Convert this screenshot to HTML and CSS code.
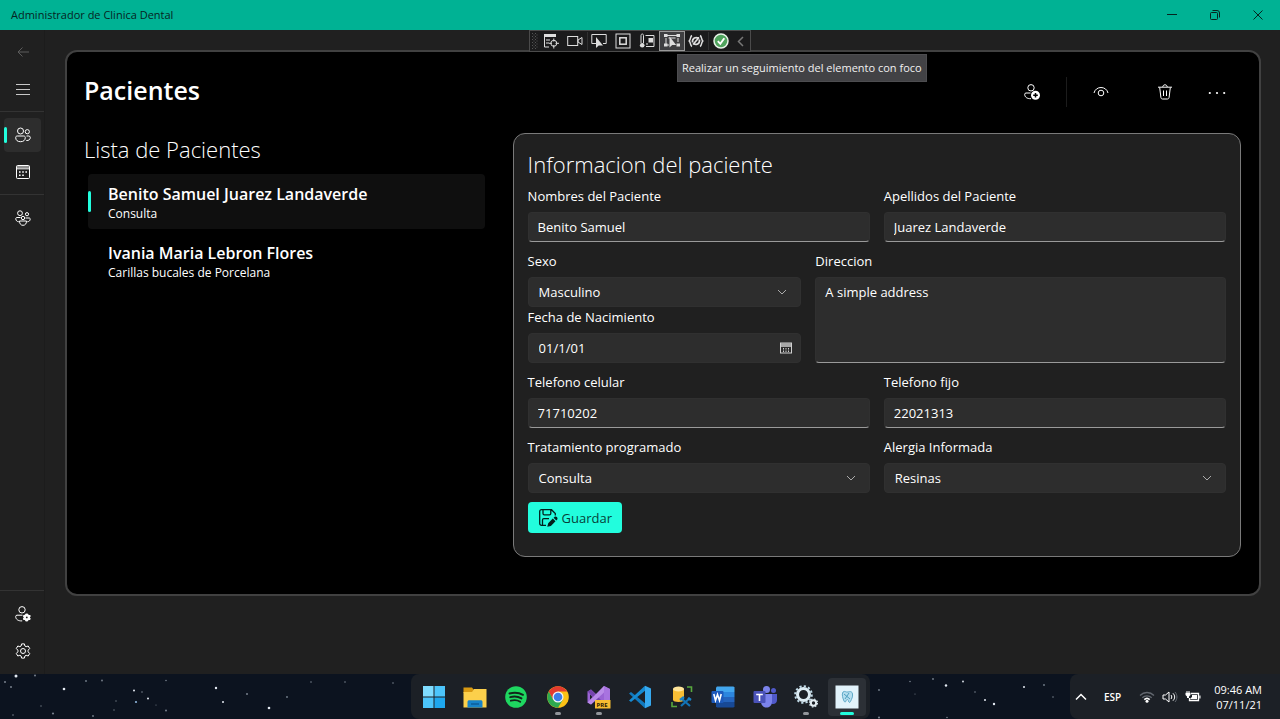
FILE: index.html
```html
<!DOCTYPE html>
<html lang="es">
<head>
<meta charset="utf-8">
<meta name="viewport" content="width=device-width, initial-scale=1">
<title>Administrador de Clinica Dental</title>
<link rel="stylesheet" href="styles.css">
</head>
<body>
<header class="titlebar">
  <span class="titlebar-text">Administrador de Clinica Dental</span>
  <div class="window-buttons">
    <button class="window-button" aria-label="Minimizar"><svg width="10" height="10" viewBox="0 0 10 10"><path d="M0 4.5h10"/></svg></button>
    <button class="window-button" aria-label="Restaurar"><svg width="10" height="10" viewBox="0 0 10 10"><rect x=".5" y="2.5" width="7" height="7" rx="1"/><path d="M2.5.5H7a2.500 2.500 0 0 1 2.500 2.500v4.500"/></svg></button>
    <button class="window-button" aria-label="Cerrar"><svg width="10" height="10" viewBox="0 0 10 10"><path d="M.5.5l9 9M9.500.5l-9 9"/></svg></button>
  </div>
</header>

<div class="app">
  <nav class="rail" aria-label="Principal">
    <button class="rail-button rail-button-muted" aria-label="Atras"><svg class="icon" viewBox="0 0 16 16"><path d="M14 8H3M7.500 3.500L3 8l4.500 4.500"/></svg></button>
    <button class="rail-button" aria-label="Menu"><svg class="icon" viewBox="0 0 16 16"><path d="M1 3.500h14M1 8.500h14M1 13.500h14" stroke="#c8c8c8"/></svg></button>
    <hr class="rail-line">
    <button class="rail-button rail-button-active" aria-label="Pacientes"><svg class="icon" viewBox="0 0 16 16"><circle cx="5.500" cy="4" r="3"/><circle cx="12.300" cy="4.700" r="2.100"/><path d="M2.200 9h6.600c.9 0 1.500.6 1.500 1.500 0 2.800-1.900 4.200-4.800 4.200S.7 13.300.7 10.500C.7 9.600 1.300 9 2.200 9zM11.500 9h2.300c.9 0 1.500.6 1.500 1.400 0 2-1.300 3.300-4 3.100"/></svg></button>
    <button class="rail-button" aria-label="Calendario"><svg class="icon" viewBox="0 0 16 16"><rect x="1.500" y="1.500" width="13" height="13" rx="1"/><path d="M1.500 3h13M1.500 4.800h13"/><path class="solid" d="M7.200 7.200h1.600v1.600H7.200zM10.400 7.200H12v1.600h-1.600zM4 7.200h1.600v1.600H4zM4 10.400h1.600V12H4zM7.200 10.400h1.600V12H7.200z"/></svg></button>
    <hr class="rail-line">
    <button class="rail-button" aria-label="Equipo"><svg class="icon" viewBox="0 0 16 16"><circle cx="5" cy="3.200" r="2.400"/><circle cx="12" cy="4.200" r="1.600"/><circle cx="8" cy="8" r="1.700"/><path d="M4.500 11h7c0 2.800-1.300 4.300-3.500 4.300S4.500 13.800 4.500 11zM5.500 7.500H2c-1 0-1.300.6-1.200 1.500.2 1.600 1.200 2.600 3 2.800M10.500 8H14c1 0 1.300.5 1.200 1.300-.2 1.500-1.200 2.300-2.900 2.500"/></svg></button>
    <div class="rail-spacer"></div>
    <hr class="rail-line">
    <button class="rail-button" aria-label="Cuenta"><svg class="icon" viewBox="0 0 16 16"><circle cx="7" cy="3.800" r="3.200"/><path d="M7.500 9.200H2c-.8 0-1.300.5-1.300 1.300 0 2.700 2.200 4.600 6.500 4.400"/><path class="solid" d="M10.500 7.800l1.300-.3 1.200.3.700 1.100 1.600.1.400 1.300-.9 1.100.9 1.200-.6 1.400-1.500.1-.8 1.200-1 .3-1.300-.4-.6-1.100-1.500-.2-.5-1.300.9-1.200-.9-1.200.6-1.300 1.400-.1z"/><circle class="hole" cx="11.800" cy="11.400" r=".9"/></svg></button>
    <button class="rail-button" aria-label="Configuracion"><svg class="icon" viewBox="0 0 16 16"><circle cx="8" cy="8" r="2.500"/><path d="M6.600.9h2.800l.5 2.100 1.200.7 2.100-.7 1.500 2.500-1.600 1.700v1.600l1.600 1.700-1.500 2.500-2.100-.7-1.200.7-.5 2.100H6.600L6.100 13l-1.200-.7-2.100.7-1.500-2.500 1.600-1.700V7.200L1.300 5.500 2.800 3l2.100.7L6.100 3z" stroke-linejoin="round"/></svg></button>
  </nav>

  <main class="content">
    <section class="panel">
      <div class="panel-header">
        <h1 class="page-title">Pacientes</h1>
        <div class="commands">
          <button class="command" aria-label="Agregar paciente"><svg class="icon" viewBox="0 0 16 16"><circle cx="7" cy="3.800" r="3.200"/><path d="M6.500 9H2c-.8 0-1.300.5-1.300 1.300 0 2.700 2.100 4.500 6.300 4.400"/><circle class="solid" cx="11.500" cy="11.300" r="4.500"/><path class="cut" d="M11.500 9v4.600M9.200 11.300h4.600"/></svg></button>
          <span class="command-line"></span>
          <button class="command" aria-label="Ver"><svg class="icon" viewBox="0 0 16 16"><path d="M1 9c.8-3.500 3.700-5.500 7-5.500S14.200 5.500 15 9"/><circle cx="8" cy="9" r="2.800"/></svg></button>
          <button class="command command-apart" aria-label="Eliminar"><svg class="icon" viewBox="0 0 16 16"><path d="M1 3.200h14M5.800 3c0-1.300.9-2.200 2.200-2.200s2.200.9 2.200 2.200M2.700 3.500l1.200 10c.1.900.7 1.500 1.600 1.500h5c.9 0 1.500-.6 1.600-1.500l1.200-10M6.500 6.500v5.500M9.500 6.500v5.500"/></svg></button>
          <button class="command" aria-label="Mas opciones"><svg class="icon icon-wide" viewBox="0 0 18 16"><circle class="solid" cx="1.800" cy="9" r="1.100"/><circle class="solid" cx="9" cy="9" r="1.100"/><circle class="solid" cx="16.200" cy="9" r="1.100"/></svg></button>
        </div>
      </div>

      <div class="columns">
        <section class="patients">
          <h2 class="section-title">Lista de Pacientes</h2>
          <ul class="patient-list">
            <li><button class="patient patient-selected"><span class="patient-name">Benito Samuel Juarez Landaverde</span><span class="patient-note">Consulta</span></button></li>
            <li><button class="patient"><span class="patient-name">Ivania Maria Lebron Flores</span><span class="patient-note">Carillas bucales de Porcelana</span></button></li>
          </ul>
        </section>

        <form class="card">
          <h2 class="section-title card-title">Informacion del paciente</h2>
          <div class="row">
            <div class="field"><label for="nombres">Nombres del Paciente</label><input class="control control-text" id="nombres" type="text" value="Benito Samuel"></div>
            <div class="field"><label for="apellidos">Apellidos del Paciente</label><input class="control control-text" id="apellidos" type="text" value="Juarez Landaverde"></div>
          </div>
          <div class="row row-uneven">
            <div class="stack">
              <div class="field"><label for="sexo">Sexo</label><div class="control-wrap"><select class="control" id="sexo"><option>Masculino</option></select><svg class="control-icon" viewBox="0 0 14 14"><path d="M3 5l4 4 4-4"/></svg></div></div>
              <div class="field"><label for="fecha">Fecha de Nacimiento</label><div class="control-wrap"><input class="control" id="fecha" type="text" value="01/1/01"><svg class="control-icon control-icon-date" viewBox="0 0 14 14"><rect x="1.500" y="2" width="11" height="10"/><path d="M1.500 3.200h11M1.500 5h11" stroke-width="1.300"/><path d="M4.500 7v4M7 7v4M9.500 7v4" stroke-dasharray="1.500 1"/></svg></div></div>
            </div>
            <div class="field"><label for="direccion">Direccion</label><textarea class="control control-text control-area" id="direccion">A simple address</textarea></div>
          </div>
          <div class="row">
            <div class="field"><label for="celular">Telefono celular</label><input class="control control-text" id="celular" type="tel" value="71710202"></div>
            <div class="field"><label for="fijo">Telefono fijo</label><input class="control control-text" id="fijo" type="tel" value="22021313"></div>
          </div>
          <div class="row">
            <div class="field"><label for="tratamiento">Tratamiento programado</label><div class="control-wrap"><select class="control" id="tratamiento"><option>Consulta</option></select><svg class="control-icon" viewBox="0 0 14 14"><path d="M3 5l4 4 4-4"/></svg></div></div>
            <div class="field"><label for="alergia">Alergia Informada</label><div class="control-wrap"><select class="control" id="alergia"><option>Resinas</option></select><svg class="control-icon" viewBox="0 0 14 14"><path d="M3 5l4 4 4-4"/></svg></div></div>
          </div>
          <button class="save" type="button"><svg class="save-icon" viewBox="0 0 20 20"><path d="M8 17.300H3.500c-1 0-1.800-.8-1.800-1.800V3.500c0-1 .8-1.800 1.800-1.800h10L17.300 5.500v2M5 2v3.500c0 .8.5 1.300 1.300 1.300h5.200c.8 0 1.300-.5 1.300-1.300V2M4.500 17v-5c0-.8.5-1.300 1.300-1.300H11"/><path class="solid" d="M9.300 18.800l.9-3.600 4.600-4.600 2.700 2.700-4.600 4.600zM15.600 9.800l.8-.8c1.700-1.400 4.100 1 2.700 2.700l-.8.8z"/></svg>Guardar</button>
        </form>
      </div>
    </section>
  </main>

  <div class="debug-bar">
    <svg class="debug-grip" viewBox="0 0 6 18"><path d="M.5 1v16M3.500 1v16" stroke-dasharray="1 2"/><path d="M2 2.500v15M5 2.500v15" stroke-dasharray="1 2"/></svg>
    <button class="debug-button" aria-label="Arbol visual"><svg class="debug-icon" viewBox="0 0 16 16"><path d="M1 2.500h12" stroke-width="3"/><path d="M1.500 4v10H6M3 7h4M3 10h3"/><circle cx="10.800" cy="10.300" r="3"/><path d="M10.800 5.500v3M10.800 12v3.500M6 10.300h3M12.500 10.300H16"/></svg></button>
    <button class="debug-button" aria-label="Camara"><svg class="debug-icon" viewBox="0 0 16 16"><rect x=".7" y="3.500" width="10" height="9"/><path d="M11 7l4-2.500v7L11 9z"/></svg></button>
    <span class="debug-line"></span>
    <button class="debug-button" aria-label="Seleccionar elemento"><svg class="debug-icon" viewBox="0 0 16 16"><path d="M5 10.500H.8v-9h14.400v9H12"/><path class="solid" d="M5 4v11l2.700-2.500H12z"/></svg></button>
    <button class="debug-button" aria-label="Adornos"><svg class="debug-icon" viewBox="0 0 16 16"><rect x="1" y="1" width="14" height="14"/><rect x="4.800" y="4.800" width="6.400" height="6.400" stroke-width="1.500"/></svg></button>
    <button class="debug-button" aria-label="Rendimiento"><svg class="debug-icon" viewBox="0 0 16 16"><path d="M2 10V2.500c0-2 2.500-2 2.500 0V10"/><circle class="solid" cx="3.200" cy="12.300" r="2.300"/><path d="M6.500 2.500H15v11H7"/><path class="solid" d="M9.500 5H14v4.500H9.500z"/><path d="M7 11h2"/></svg></button>
    <button class="debug-button debug-button-on" aria-label="Seguimiento del foco"><svg class="debug-icon" viewBox="0 0 16 16"><path d="M3 2.500h10M2 5v6M14 5v4M3 12h2M4.500 5h7"/><path class="solid" d="M0 1h3.500v3H0zM12.500 1H16v3h-3.500zM0 10.500h3.500v3H0zM12.500 10.500H16v3h-3.500zM5.500 3.500v11l2.700-2.500h4z"/></svg></button>
    <button class="debug-button" aria-label="Recarga activa"><svg class="debug-icon" viewBox="0 0 16 16"><path d="M4 2.500C2 3.500 3 6 1.200 8 3 10 2 12.500 4 13.500M12 2.500c2 1 1 3.500 2.800 5.500-1.800 2-.8 4.500-2.800 5.500" stroke-width="1.500"/><path d="M4.500 9.500C4 5 8 3.500 10.500 5.500M11.500 6.500c.5 4.500-3.500 6-6 4M5 11.500l6-7" stroke-width="1.700"/></svg></button>
    <span class="debug-line"></span>
    <button class="debug-button" aria-label="Estado correcto"><svg class="debug-icon" viewBox="0 0 16 16"><circle cx="8" cy="8" r="7" fill="#4fa35d" stroke="#e8f2e8" stroke-width="1.500"/><path d="M4.800 8.200l2.500 2.600 4-5.600" stroke="#fff" stroke-width="1.900"/></svg></button>
    <button class="debug-button debug-button-muted" aria-label="Contraer"><svg class="debug-icon" viewBox="0 0 16 16"><path d="M10 4L5.500 8.500 10 13" stroke-width="1.500"/></svg></button>
    <div class="tooltip" role="tooltip">Realizar un seguimiento del elemento con foco</div>
  </div>
</div>

<footer class="taskbar">
  <svg class="stars" viewBox="0 0 1280 45" preserveAspectRatio="xMidYMid slice" aria-hidden="true">
    <g fill="#e4eaf2"><circle cx="16" cy="2" r="1.500"/><circle cx="64" cy="15" r="1.300"/><circle cx="134" cy="16.500" r="1"/><circle cx="216" cy="14" r="1.200"/><circle cx="223" cy="28" r="1"/><circle cx="269" cy="34" r="1.300"/><circle cx="136" cy="28" r="1.100" fill="#8fb6dc"/><circle cx="148" cy="24.500" r="1"/><circle cx="946" cy="11.500" r="1.200"/><circle cx="994" cy="30" r="1.200"/><circle cx="985" cy="26" r="1"/><circle cx="963" cy="7.500" r=".9"/><circle cx="1024" cy="13" r="1"/></g>
    <g fill="#77808c"><circle cx="35" cy="1.500" r="1"/><circle cx="5" cy="8" r="1"/><circle cx="11" cy="13" r="1"/><circle cx="53" cy="39.500" r="1.100"/><circle cx="41" cy="32" r=".7"/><circle cx="13" cy="41" r=".8"/><circle cx="86" cy="7" r=".9"/><circle cx="102" cy="6.500" r=".9"/><circle cx="93" cy="42" r=".9"/><circle cx="116" cy="27" r=".7"/><circle cx="142" cy="18" r=".8"/><circle cx="166" cy="6.500" r=".8"/><circle cx="166" cy="36.500" r="1"/><circle cx="156" cy="31" r=".6"/><circle cx="114" cy="36" r=".7"/><circle cx="247" cy="20" r="1"/><circle cx="287" cy="23" r=".9"/><circle cx="311" cy="8" r=".8"/><circle cx="345" cy="8" r=".8"/><circle cx="393" cy="9" r=".8"/><circle cx="879" cy="16" r=".9"/><circle cx="933" cy="5" r=".9"/><circle cx="910" cy="7.500" r=".8"/><circle cx="915" cy="20" r=".6"/><circle cx="975" cy="18" r=".8"/><circle cx="879" cy="43.500" r="1.100"/><circle cx="947" cy="43.500" r=".8"/><circle cx="1044" cy="11" r=".9"/><circle cx="1053" cy="23" r=".8"/></g>
  </svg>
  <div class="dock">
    <button class="dock-button" aria-label="Inicio"><svg class="dock-icon" viewBox="0 0 24 24"><path d="M1 1h10.500v10.500H1z" fill="#7fdcff"/><path d="M12.500 1H23v10.500H12.500zM1 12.500h10.500V23H1z" fill="#4cc5fb"/><path d="M12.500 12.500H23V23H12.500z" fill="#1ea7ee"/></svg></button>
    <button class="dock-button" aria-label="Explorador"><svg class="dock-icon" viewBox="0 0 24 24"><path d="M.5 2.500H9l2 2.500-2 3H.5z" fill="#d99a12"/><path d="M.5 7H9l2-3h12.500v18.500H.5z" fill="#fcd04b"/><path d="M4.500 22.500V17c0-1.200.7-1.800 1.800-1.800h11.400c1.100 0 1.800.6 1.800 1.800v5.500z" fill="#1683c9"/><path d="M8 19h8" stroke="#0c5c98" stroke-width="1.500"/></svg></button>
    <button class="dock-button" aria-label="Spotify"><svg class="dock-icon" viewBox="0 0 24 24"><circle cx="12" cy="12" r="10.800" fill="#1ed760"/><path d="M5.500 8.500c4.800-1.400 9.600-.9 13.500 1.300M6.200 12.200c4-1.200 8-.7 11.300 1.200M6.900 15.700c3.300-1 6.600-.6 9.300 1" fill="none" stroke="#12251a" stroke-width="1.900" stroke-linecap="round"/></svg></button>
    <button class="dock-button dock-button-open" aria-label="Chrome"><svg class="dock-icon" viewBox="0 0 24 24"><circle cx="12" cy="12" r="10.800" fill="#fbc116"/><path d="M2.700 6.600A10.800 10.800 0 0 1 21.300 6.600H12L7.200 14.800z" fill="#e33b2e"/><path d="M2.700 6.600A10.800 10.800 0 0 0 12 22.800l4.800-8H7.200z" fill="#2da94f"/><circle cx="12" cy="12" r="5.500" fill="#f3f5f8"/><circle cx="12" cy="12" r="4.300" fill="#3d7de8"/></svg></button>
    <button class="dock-button dock-button-open" aria-label="Visual Studio"><svg class="dock-icon" viewBox="0 0 24 24"><path d="M.5 6.500L4 4.500l5.500 5L17 1l6 3v16l-6 3-7.500-8.500-5.500 5-3.500-2z" fill="#9a63d4"/><path d="M.5 6.500L4 4.500 20 21.500 17 23z" fill="#7644ae"/><path d="M4 19.500l-3.500-2L17 1v6.500z" fill="#b98be8"/><path d="M3 9.500L5.500 12 3 14.500z" fill="#1c2026"/><path d="M17 1l6 3v16l-6 3z" fill="#a873e0"/><rect x="8" y="15" width="15.500" height="8.500" fill="#f6bd31"/><text x="9.500" y="21.800" class="pre-text">PRE</text></svg></button>
    <button class="dock-button" aria-label="Visual Studio Code"><svg class="dock-icon" viewBox="0 0 24 24"><path d="M1 8.500L3 7l15 12-1 4.300z" fill="#1179bd"/><path d="M1 15.500L3 17 18 5l-1-4.300z" fill="#168bd2"/><path d="M17 .7L23 3.500v17l-6 2.800z" fill="#36a9ef"/></svg></button>
    <button class="dock-button" aria-label="Base de datos"><svg class="dock-icon" viewBox="0 0 24 24"><path d="M3 4v11c0 2.500 11 2.500 11 0V4z" fill="#f7bd35"/><ellipse cx="8.500" cy="4" rx="5.500" ry="2.500" fill="#ffe59a"/><path d="M17 2h4.500v5M2 17v4.500h5" fill="none" stroke="#58a83e" stroke-width="1.600"/><path d="M11 21l9-8M12 14l8 7" stroke="#1273b5" stroke-width="2.200"/><path d="M10 15l4-3M18 13l3 2" stroke="#1983c9" stroke-width="2.400"/></svg></button>
    <button class="dock-button" aria-label="Word"><svg class="dock-icon" viewBox="0 0 24 24"><path d="M6 1.500h16.500l1 1V7H5V2.500z" fill="#42a6ee"/><path d="M5 7h18.500v5H5z" fill="#2c86de"/><path d="M5 12h18.500v5H5z" fill="#2464bd"/><path d="M5 17h18.500v4.500l-1 1H6l-1-1z" fill="#174996"/><rect x=".5" y="6" width="12" height="12" rx="1" fill="#1d5abc"/><path d="M2.800 9l1.700 6.500 2-6 2 6L10.200 9" fill="none" stroke="#fff" stroke-width="1.600"/></svg></button>
    <button class="dock-button" aria-label="Teams"><svg class="dock-icon" viewBox="0 0 24 24"><circle cx="13.500" cy="4.500" r="3.500" fill="#7b83eb"/><circle cx="20.500" cy="5.500" r="2.500" fill="#5059c9"/><path d="M16 9h8v6c0 5-6 5-7 2z" fill="#5059c9"/><path d="M8 9h11v7.500c0 8-11 8-11 0z" fill="#7b83eb"/><rect x=".5" y="6" width="12" height="12" rx="1" fill="#4a52b8"/><path d="M3.200 9.500h6.600M6.500 9.500V16" stroke="#fff" stroke-width="1.600"/></svg></button>
    <button class="dock-button dock-button-open" aria-label="Servicios"><svg class="dock-icon" viewBox="0 0 24 24"><circle cx="9.500" cy="9.500" r="6" fill="none" stroke="#dcebf2" stroke-width="3"/><circle cx="9.500" cy="9.500" r="8.300" fill="none" stroke="#c2dbe8" stroke-width="2" stroke-dasharray="2.200 2.146"/><circle cx="19.500" cy="18" r="2.700" fill="none" stroke="#e6eef2" stroke-width="2"/><circle cx="19.500" cy="18" r="4" fill="none" stroke="#cddde5" stroke-width="1.300" stroke-dasharray="1.570 1.570"/></svg></button>
    <button class="dock-button dock-button-current" aria-label="Clinica Dental"><svg class="dock-icon" viewBox="0 0 24 24"><path d="M.5.5h23v23H.5z" fill="#e2f3fb"/><path d="M8 7c2-1.500 3 .5 5 0s4-1 4.500 2-1 5-2 7.500c-.6 1.500-1.800 1-2-.5-.5-2-2-2-2.500 0-.4 1.400-1.500 1.300-2 0-1-2.500-2.600-6.500-1-9z" fill="#b5deef" stroke="#5fa9c8"/><path d="M9 9l6 5M14 8l-4 6" stroke="#4c9fc0"/></svg></button>
  </div>
  <div class="tray">
    <button class="tray-button" aria-label="Iconos ocultos"><svg width="14" height="14" viewBox="0 0 14 14"><path d="M2 9.500l5-5 5 5" stroke-width="1.500"/></svg></button>
    <span class="tray-language">ESP</span>
    <div class="tray-status">
      <svg width="16" height="14" viewBox="0 0 16 14"><path d="M1 5.500c4-4 10-4 14 0M3.300 7.800c2.700-2.600 6.700-2.600 9.400 0" stroke="#636870" stroke-width="1.300"/><path d="M5.300 9.600c1.600-1.500 3.800-1.500 5.400 0" stroke-width="1.600"/><circle class="solid" cx="8" cy="11.300" r="1.500"/></svg>
      <svg width="16" height="14" viewBox="0 0 16 14"><path d="M1 5h2.500L7 2v10L3.500 9H1zM9 5c1 1.200 1 2.800 0 4M11 3.300c2.200 2.200 2.200 5.200 0 7.400"/><path d="M13 2c2.600 3 2.600 7 0 10" stroke="#636870"/></svg>
      <svg width="16" height="14" viewBox="0 0 16 14"><path d="M6 3.500h7.500v7H4.500V8" stroke-width="1.300"/><path class="solid" d="M7 5h5v4H5.500V8.200L7 7zM14.300 5.500h1.200v3h-1.200zM.5 2.800h1V1h1v1.800h1V1h1v1.800h1V5L4 6.500V8H2V6.500L.5 5z"/></svg>
    </div>
    <time class="clock" datetime="2021-11-07T09:46"><span>09:46 AM</span><span>07/11/21</span></time>
  </div>
</footer>
</body>
</html>
```
FILE: styles.css
```css
* {
  box-sizing: border-box;
}

body {
  margin: 0;
  min-height: 100vh;
  display: flex;
  flex-direction: column;
  background: #202020;
  color: #fff;
  font-family: "Open Sans", "Noto Sans", sans-serif;
  font-size: 13px;
  line-height: 20px;
}

button,
input,
select,
textarea {
  margin: 0;
  padding: 0;
  border: 0;
  background: none;
  color: inherit;
  font: inherit;
}

svg {
  display: block;
  fill: none;
  stroke: currentColor;
}

.solid {
  fill: currentColor;
  stroke: none;
}

.hole {
  fill: #202020;
  stroke: none;
}

.cut {
  stroke: #000;
  stroke-width: 1.5;
}

/* Title bar */
.titlebar {
  height: 30px;
  display: flex;
  align-items: center;
  justify-content: space-between;
  padding: 0 1px 0 11px;
  background: #00b294;
  color: #06241f;
}

.titlebar-text {
  font-size: 11px;
}

.window-buttons {
  display: flex;
}

.window-button {
  width: 43px;
  height: 30px;
  display: grid;
  place-items: center;
}

/* Application frame */
.app {
  position: relative;
  flex: 1;
  display: flex;
}

.rail {
  width: 45px;
  display: flex;
  flex-direction: column;
  gap: 3px;
  padding: 5px 0 6px;
  border-right: 1px solid #1c1c1c;
}

.rail-button {
  width: 37px;
  height: 34px;
  margin: 0 4px;
  display: grid;
  place-items: center;
  border-radius: 4px;
}

.rail-button-muted {
  color: #5c5c5c;
}

.rail-button-active {
  position: relative;
  background: #2d2d2d;
}

.rail-button-active::before {
  content: "";
  position: absolute;
  left: 0;
  top: 9px;
  width: 3px;
  height: 16px;
  border-radius: 2px;
  background: #22fddd;
}

.rail-line {
  width: 100%;
  height: 1px;
  margin: 2px 0 3px;
  border: 0;
  background: #333;
}

.rail-spacer {
  flex: 1;
}

.icon {
  width: 16px;
  height: 16px;
}

.icon-wide {
  width: 18px;
}

.content {
  flex: 1;
  min-width: 0;
  padding: 20px 19px 20px 20px;
}

.panel {
  padding: 0 18px 37px 17px;
  border: 2px solid #414141;
  border-radius: 12px;
  background: #000;
}

.panel-header {
  height: 81px;
  display: flex;
  align-items: center;
  justify-content: space-between;
}

.page-title {
  margin: 0 0 6px;
  font-size: 25px;
  font-weight: 600;
  line-height: 32px;
}

.commands {
  display: flex;
  align-items: center;
  margin: 0 -2px 2px 0;
}

.command {
  width: 52px;
  height: 36px;
  display: grid;
  place-items: center;
}

.command-apart {
  margin-left: 12px;
}

.command-line {
  width: 1px;
  height: 30px;
  margin: 0 8px;
  background: #1c1c1c;
}

.columns {
  display: grid;
  grid-template-columns: 11fr 20fr;
  gap: 28px;
}

.section-title {
  margin: 0;
  font-size: 22px;
  font-weight: 300;
  line-height: 32px;
}

/* Patient list */
.patient-list {
  margin: 9px 0 0 4px;
  padding: 0;
  display: flex;
  flex-direction: column;
  gap: 4px;
  list-style: none;
}

.patient {
  position: relative;
  width: 100%;
  height: 55px;
  display: flex;
  flex-direction: column;
  justify-content: center;
  padding: 4px 0 0 20px;
  border-radius: 4px;
  text-align: left;
}

.patient-selected {
  background: #0f0f0f;
}

.patient-selected::before {
  content: "";
  position: absolute;
  left: 0;
  top: 17px;
  width: 3px;
  height: 21px;
  border-radius: 2px;
  background: #22fddd;
}

.patient-name {
  font-size: 16px;
  font-weight: 600;
}

.patient-note {
  font-size: 12px;
}

/* Patient form */
.card {
  display: flex;
  flex-direction: column;
  gap: 9px;
  padding: 14px 14px 23px;
  border: 1px solid #7a7a7a;
  border-radius: 12px;
  background: #202020;
}

.card-title {
  margin-bottom: -3px;
}

.row {
  display: grid;
  grid-template-columns: 1fr 1fr;
  gap: 14px;
}

.row-uneven {
  grid-template-columns: 2fr 3fr;
}

.field {
  display: flex;
  flex-direction: column;
  gap: 6px;
  min-width: 0;
}

.control {
  width: 100%;
  height: 30px;
  padding: 0 10px;
  border: 1px solid #303030;
  border-radius: 4px;
  background: #2d2d2d;
  appearance: none;
}

.control-text {
  padding: 0 9px;
  border-bottom-color: #9a9a9a;
}

.control-area {
  flex: 1;
  padding: 4px 9px;
  resize: none;
}

.control-wrap {
  position: relative;
}

.control-icon {
  position: absolute;
  right: 12px;
  top: 8px;
  width: 14px;
  height: 14px;
  color: #ababab;
  pointer-events: none;
}

.control-icon-date {
  right: 8px;
  color: #d0d0d0;
}

.save {
  align-self: flex-start;
  height: 31px;
  display: flex;
  align-items: center;
  gap: 4px;
  padding: 0 10px;
  border-radius: 4px;
  background: #22fddd;
  color: #063f38;
}

.save-icon {
  width: 20px;
  height: 20px;
  color: #02201c;
  stroke-width: 1.3;
}

/* Debug toolbar over the window */
.debug-bar {
  position: absolute;
  top: 0;
  left: 50%;
  transform: translateX(-50%);
  width: 222px;
  height: 22px;
  display: flex;
  align-items: center;
  padding: 0 1px 0 2px;
  border: 1px solid #4b4b4b;
  background: #1b1b1c;
  color: #dedede;
}

.debug-grip {
  width: 6px;
  height: 18px;
  margin-right: 1px;
  color: #555;
}

.debug-button {
  flex: 1;
  height: 20px;
  display: grid;
  place-items: center;
}

.debug-button-on {
  border: 1px solid #999;
  background: #3f3f41;
}

.debug-button-muted {
  flex: 0 0 14px;
  color: #777;
}

.debug-icon {
  width: 16px;
  height: 16px;
}

.debug-line {
  width: 1px;
  height: 18px;
  background: #303031;
}

.tooltip {
  position: absolute;
  left: 147px;
  top: 23px;
  padding: 3px 4px;
  border: 1px solid #4d4d50;
  background: #424245;
  color: #f1f1f1;
  font-size: 11px;
  white-space: nowrap;
}

/* Taskbar */
.taskbar {
  position: relative;
  height: 45px;
  display: grid;
  grid-template-columns: 1fr 459px 1fr;
  background: #0c131f;
}

.stars {
  position: absolute;
  inset: 0;
  width: 100%;
  height: 100%;
  stroke: none;
}

.dock {
  position: relative;
  grid-column: 2;
  display: flex;
  align-items: center;
  justify-content: space-between;
  padding: 0 3px 0 4px;
  border-radius: 8px;
  background: #1c2026;
}

.dock-button {
  position: relative;
  width: 38px;
  height: 38px;
  display: grid;
  place-items: center;
  border-radius: 4px;
}

.dock-icon {
  width: 24px;
  height: 24px;
  stroke: none;
}

.dock-button-current {
  background: #2c3036;
}

.dock-button-open::after,
.dock-button-current::after {
  content: "";
  position: absolute;
  bottom: 1px;
  width: 6px;
  height: 3px;
  border-radius: 2px;
  background: #92959a;
}

.dock-button-current::after {
  width: 14px;
  background: #22fddd;
}

.pre-text {
  fill: #2b2005;
  font-size: 6px;
  font-weight: 700;
}

.tray {
  position: relative;
  justify-self: end;
  display: flex;
  align-items: center;
  padding: 0 18px 0 4px;
  border-radius: 8px 0 0 8px;
  background: #1c2026;
  font-size: 11px;
}

.tray-button {
  display: grid;
  place-items: center;
}

.tray-language {
  margin-left: 16px;
  font-size: 10px;
  font-weight: 600;
}

.tray-status {
  display: flex;
  gap: 7px;
  margin: 0 13px 0 18px;
}

.clock {
  display: flex;
  flex-direction: column;
  font-size: 11px;
  line-height: 15px;
  text-align: right;
}
```
